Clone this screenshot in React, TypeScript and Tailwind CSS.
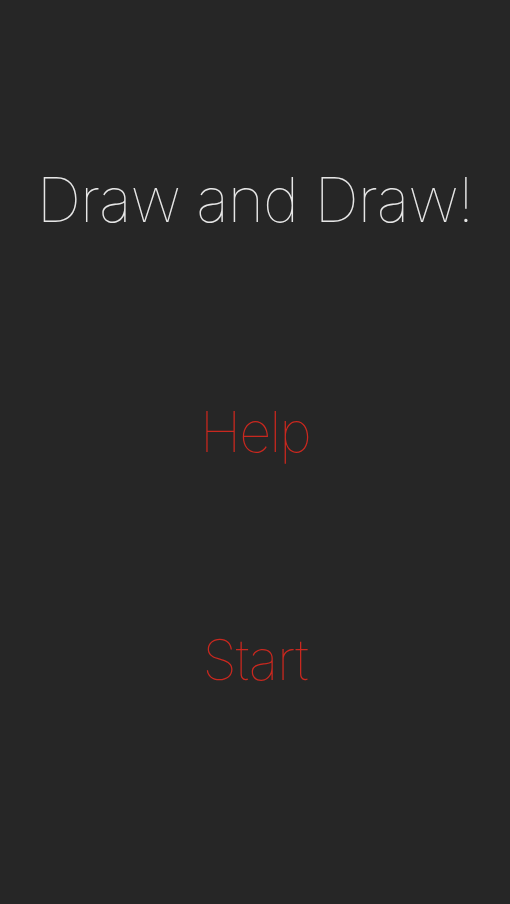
export default function App() {
  return (
    <div
      className="flex h-[904px] w-full flex-col items-center bg-[#262626]"
      style={{ fontFamily: "Inter, 'Liberation Sans', sans-serif" }}
    >
      <h1 className="mt-[160px] text-[62px] leading-[80px] font-thin tracking-[-1px] text-[#e6e6e6]">
        Draw and Draw!
      </h1>
      <button className="mt-[152px] text-[56px] leading-[80px] font-thin tracking-[-2px] text-[#c9281f]">
        Help
      </button>
      <button className="mt-[148px] text-[56px] leading-[80px] font-thin tracking-[-1px] text-[#c9281f]">
        Start
      </button>
    </div>
  );
}
